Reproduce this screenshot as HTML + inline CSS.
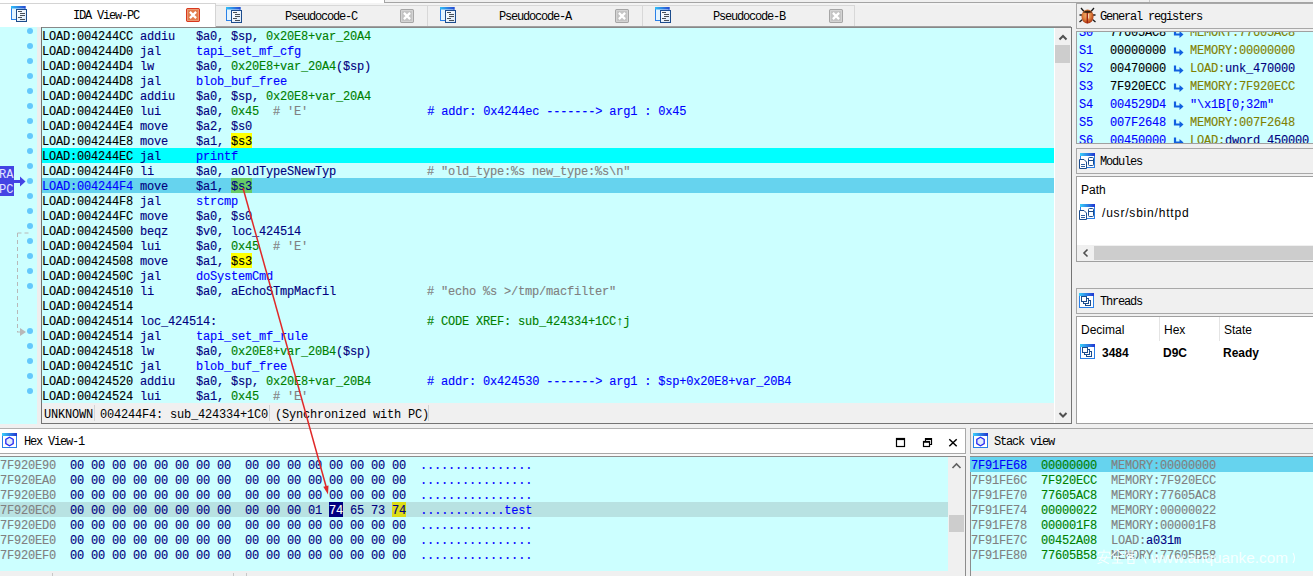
<!DOCTYPE html>
<html><head><meta charset="utf-8"><style>
*{margin:0;padding:0;box-sizing:border-box}
html,body{width:1313px;height:576px;overflow:hidden;background:#f0f0f0;position:relative}
div,svg,span.abs{position:absolute}
.mono{font-family:"Liberation Mono",monospace}
.cr,.hr,.sr,.rr{-webkit-text-stroke:0.12px;font-family:"Liberation Mono",monospace;font-size:12px;letter-spacing:-0.2px;line-height:18px;height:15px;white-space:pre}
.cr>span:first-child,.hr>span:first-child{}
.cr{left:42px;width:1012px;padding-left:0}
.cr.pc{background:#00ffff}
.cr.cur{background:#66d3ee}
.ad{color:#000} .adc{color:#0000ff}
.mn,.rg{color:#000080}
.nm{color:#008000}
.fn{color:#0000ff}
.cm{color:#808080}
.uc{color:#0000ff}
.xr{color:#008000}
.hy,.hg,.hsel,.hy2{display:inline-block;height:15px;vertical-align:top;line-height:18px}
.hy{background:#ffff00} .hy2{background:#dcdc18}
.hg{background:#66cc66;color:#000080}
.ttl{font-family:"Liberation Mono",monospace;font-size:12px;letter-spacing:-1.2px;line-height:12px;color:#000;white-space:pre}
.tab{top:5px;height:21px;background:#f0f0f0;border-top:1px solid #d8d8d8;border-right:1px solid #d8d8d8}
.tab.act{top:3px;height:24px;background:#fff;border-top:1px solid #d4d4d4;border-right:1px solid #d4d4d4}
.dot{left:27px;width:6px;height:6px;border-radius:50%;background:#64c8fc;margin-top:0px}
.hr{left:0;width:948px}
.hr.sel{background:#b8e2e2}
.ha{color:#808080} .hb{color:#000080} .hc{color:#0000ff}
.hsel{background:#000080;color:#fff}
.sr{left:970px;width:343px;padding-left:1px}
.sr.cur{background:#66d3ee}
.sa{color:#808080} .sa0{color:#0000ff} .sv{color:#008000} .sd{color:#808080}
.rr{left:0;width:236px;height:18px;line-height:18px}
.rnm{position:absolute;left:2px;color:#0000ff}
.rv{position:absolute;left:33px}
.rv.k{color:#000} .rv.b{color:#0000ff}
.rar{position:absolute;left:96px;top:5px}
.rd{position:absolute;left:113px}
.rm{color:#808000} .rn{color:#000080} .rs{color:#0000ff}
.ui{font-family:"Liberation Sans",sans-serif;font-size:12px;line-height:14px;color:#000;white-space:pre}
.wm{left:1151px;top:550px;font-family:"Liberation Sans",sans-serif;font-size:15.3px;line-height:16px;color:rgba(255,255,255,0.85);white-space:pre}
</style></head><body>
<svg width="0" height="0" style="position:absolute"><defs><linearGradient id="wg" x1="0" y1="0" x2="1" y2="0"><stop offset="0" stop-color="#3ad0fa"/><stop offset="1" stop-color="#2034d0"/></linearGradient></defs></svg>
<!-- top strip -->
<div style="left:0;top:0;width:384px;height:3px;background:#fff"></div>
<div style="left:384px;top:2px;width:929px;height:1px;background:#a4a4a4"></div>
<div style="left:384px;top:0;width:1px;height:3px;background:#a4a4a4"></div>
<div style="left:1149px;top:0;width:1px;height:2px;background:#c8c8c8"></div>
<div style="left:216px;top:3px;width:855px;height:2px;background:#f4f4f4"></div>
<div class="tab act" style="left:0;width:216px"></div><svg class="ic" style="left:11px;top:6px" width="16" height="16" viewBox="0 0 16 16">
<defs><linearGradient id="g116" x1="0" y1="0" x2="1" y2="0"><stop offset="0" stop-color="#30c0f8"/><stop offset="1" stop-color="#2848d0"/></linearGradient>
<linearGradient id="h116" x1="0" y1="0" x2="1" y2="1"><stop offset="0" stop-color="#ffffff"/><stop offset="1" stop-color="#d8e8f8"/></linearGradient></defs>
<rect x="0.5" y="0.5" width="13.5" height="13" fill="#e4f4ff" stroke="#2a80e8"/>
<rect x="0" y="0" width="14.5" height="2.5" fill="url(#g116)"/>
<rect x="5.5" y="3.5" width="10" height="12" fill="url(#h116)" stroke="#1c4c8c"/>
<path d="M7 5.5h4M9 7.5h5M9 9.5h5M7 11.5h4M9 13.5h5" stroke="#485058" stroke-width="1"/>
</svg><div class="ttl" style="left:73px;top:10px">IDA View-PC</div><svg class="ic" style="left:186px;top:8px" width="14" height="14" viewBox="0 0 14 14">
<rect x="0.5" y="0.5" width="13" height="13" rx="1.6" fill="#e27c4c" stroke="#d8381e" stroke-width="1.1"/>
<rect x="1.6" y="1.6" width="10.8" height="10.8" fill="none" stroke="#eea07c" stroke-width="0.9"/>
<path d="M3.9 3.9 L10.1 10.1 M10.1 3.9 L3.9 10.1" stroke="#fff" stroke-width="2.2"/>
</svg><div class="tab" style="left:216px;width:212px"></div><svg class="ic" style="left:226px;top:7px" width="16" height="16" viewBox="0 0 16 16">
<defs><linearGradient id="g2267" x1="0" y1="0" x2="1" y2="0"><stop offset="0" stop-color="#30c0f8"/><stop offset="1" stop-color="#2848d0"/></linearGradient>
<linearGradient id="h2267" x1="0" y1="0" x2="1" y2="1"><stop offset="0" stop-color="#ffffff"/><stop offset="1" stop-color="#d8e8f8"/></linearGradient></defs>
<rect x="0.5" y="0.5" width="13.5" height="13" fill="#e4f4ff" stroke="#2a80e8"/>
<rect x="0" y="0" width="14.5" height="2.5" fill="url(#g2267)"/>
<rect x="5.5" y="3.5" width="10" height="12" fill="url(#h2267)" stroke="#1c4c8c"/>
<path d="M7 5.5h4M9 7.5h5M9 9.5h5M7 11.5h4M9 13.5h5" stroke="#485058" stroke-width="1"/>
</svg><div class="ttl" style="left:285px;top:11px">Pseudocode-C</div><svg class="ic" style="left:400px;top:9px" width="14" height="14" viewBox="0 0 14 14">
<rect x="0.5" y="0.5" width="13" height="13" rx="1.6" fill="#c4c4c4" stroke="#a6a6a6" stroke-width="1.1"/>
<rect x="1.6" y="1.6" width="10.8" height="10.8" fill="none" stroke="#d6d6d6" stroke-width="0.9"/>
<path d="M3.9 3.9 L10.1 10.1 M10.1 3.9 L3.9 10.1" stroke="#fff" stroke-width="2.2"/>
</svg><div class="tab" style="left:428px;width:215px"></div><svg class="ic" style="left:440px;top:7px" width="16" height="16" viewBox="0 0 16 16">
<defs><linearGradient id="g4407" x1="0" y1="0" x2="1" y2="0"><stop offset="0" stop-color="#30c0f8"/><stop offset="1" stop-color="#2848d0"/></linearGradient>
<linearGradient id="h4407" x1="0" y1="0" x2="1" y2="1"><stop offset="0" stop-color="#ffffff"/><stop offset="1" stop-color="#d8e8f8"/></linearGradient></defs>
<rect x="0.5" y="0.5" width="13.5" height="13" fill="#e4f4ff" stroke="#2a80e8"/>
<rect x="0" y="0" width="14.5" height="2.5" fill="url(#g4407)"/>
<rect x="5.5" y="3.5" width="10" height="12" fill="url(#h4407)" stroke="#1c4c8c"/>
<path d="M7 5.5h4M9 7.5h5M9 9.5h5M7 11.5h4M9 13.5h5" stroke="#485058" stroke-width="1"/>
</svg><div class="ttl" style="left:499px;top:11px">Pseudocode-A</div><svg class="ic" style="left:615px;top:9px" width="14" height="14" viewBox="0 0 14 14">
<rect x="0.5" y="0.5" width="13" height="13" rx="1.6" fill="#c4c4c4" stroke="#a6a6a6" stroke-width="1.1"/>
<rect x="1.6" y="1.6" width="10.8" height="10.8" fill="none" stroke="#d6d6d6" stroke-width="0.9"/>
<path d="M3.9 3.9 L10.1 10.1 M10.1 3.9 L3.9 10.1" stroke="#fff" stroke-width="2.2"/>
</svg><div class="tab" style="left:643px;width:212px"></div><svg class="ic" style="left:655px;top:7px" width="16" height="16" viewBox="0 0 16 16">
<defs><linearGradient id="g6557" x1="0" y1="0" x2="1" y2="0"><stop offset="0" stop-color="#30c0f8"/><stop offset="1" stop-color="#2848d0"/></linearGradient>
<linearGradient id="h6557" x1="0" y1="0" x2="1" y2="1"><stop offset="0" stop-color="#ffffff"/><stop offset="1" stop-color="#d8e8f8"/></linearGradient></defs>
<rect x="0.5" y="0.5" width="13.5" height="13" fill="#e4f4ff" stroke="#2a80e8"/>
<rect x="0" y="0" width="14.5" height="2.5" fill="url(#g6557)"/>
<rect x="5.5" y="3.5" width="10" height="12" fill="url(#h6557)" stroke="#1c4c8c"/>
<path d="M7 5.5h4M9 7.5h5M9 9.5h5M7 11.5h4M9 13.5h5" stroke="#485058" stroke-width="1"/>
</svg><div class="ttl" style="left:713px;top:11px">Pseudocode-B</div><svg class="ic" style="left:829px;top:9px" width="14" height="14" viewBox="0 0 14 14">
<rect x="0.5" y="0.5" width="13" height="13" rx="1.6" fill="#c4c4c4" stroke="#a6a6a6" stroke-width="1.1"/>
<rect x="1.6" y="1.6" width="10.8" height="10.8" fill="none" stroke="#d6d6d6" stroke-width="0.9"/>
<path d="M3.9 3.9 L10.1 10.1 M10.1 3.9 L3.9 10.1" stroke="#fff" stroke-width="2.2"/>
</svg>
<div style="left:216px;top:26px;width:855px;height:1px;background:#a0a0a0"></div>
<div style="left:41px;top:27px;width:1030px;height:1px;background:#888888"></div>

<!-- code view -->
<div style="left:0;top:27px;width:37px;height:397px;background:#ccffff"></div>
<div style="left:37px;top:27px;width:4px;height:397px;background:#eeeeee"></div>
<div style="left:41px;top:27px;width:1px;height:397px;background:#747474"></div>
<div style="left:42px;top:28px;width:1012px;height:375px;background:#ccffff"></div>
<div class="dot" style="top:28px"></div><div class="dot" style="top:43px"></div><div class="dot" style="top:58px"></div><div class="dot" style="top:73px"></div><div class="dot" style="top:88px"></div><div class="dot" style="top:103px"></div><div class="dot" style="top:118px"></div><div class="dot" style="top:133px"></div><div class="dot" style="top:148px"></div><div class="dot" style="top:163px"></div><div class="dot" style="top:178px"></div><div class="dot" style="top:193px"></div><div class="dot" style="top:208px"></div><div class="dot" style="top:223px"></div><div class="dot" style="top:238px"></div><div class="dot" style="top:253px"></div><div class="dot" style="top:268px"></div><div class="dot" style="top:283px"></div><div class="dot" style="top:328px"></div><div class="dot" style="top:343px"></div><div class="dot" style="top:358px"></div><div class="dot" style="top:373px"></div><div class="dot" style="top:388px"></div>
<svg style="left:0;top:0" width="42" height="424" viewBox="0 0 42 424">
<path d="M17.5 233 V332 M17.5 233 H30 M17 332 H22" stroke="#b8b8b8" stroke-width="1" stroke-dasharray="4 3" fill="none"/>
<path d="M20 328 L26 332 L20 336 Z" fill="#b8b8b8"/>
<path d="M14 181.5 H21" stroke="#4444e4" stroke-width="3"/>
<path d="M20 176.5 L25.5 181.5 L20 186.5 Z" fill="#4444e4"/>
</svg>
<div style="left:0;top:166px;width:14px;height:30px;background:#4444e4"></div>
<div class="mono" style="left:-1px;top:168px;font-size:12px;line-height:15px;color:#e4e4ff;white-space:pre">RA<br>PC</div>
<div class="cr" style="top:28px"><span class="ad">LOAD:004244CC</span> <span class="mn">addiu   </span><span class="rg">$a0, $sp, </span><span class="nm">0x20E8+var_20A4</span></div>
<div class="cr" style="top:43px"><span class="ad">LOAD:004244D0</span> <span class="mn">jal     </span><span class="fn">tapi_set_mf_cfg</span></div>
<div class="cr" style="top:58px"><span class="ad">LOAD:004244D4</span> <span class="mn">lw      </span><span class="rg">$a0, </span><span class="nm">0x20E8+var_20A4</span><span class="rg">($sp)</span></div>
<div class="cr" style="top:73px"><span class="ad">LOAD:004244D8</span> <span class="mn">jal     </span><span class="fn">blob_buf_free</span></div>
<div class="cr" style="top:88px"><span class="ad">LOAD:004244DC</span> <span class="mn">addiu   </span><span class="rg">$a0, $sp, </span><span class="nm">0x20E8+var_20A4</span></div>
<div class="cr" style="top:103px"><span class="ad">LOAD:004244E0</span> <span class="mn">lui     </span><span class="rg">$a0, </span><span class="nm">0x45</span>  <span class="cm"># &#x27;E&#x27;</span>                 <span class="uc"># addr: 0x4244ec -------&gt; arg1 : 0x45</span></div>
<div class="cr" style="top:118px"><span class="ad">LOAD:004244E4</span> <span class="mn">move    </span><span class="rg">$a2, $s0</span></div>
<div class="cr" style="top:133px"><span class="ad">LOAD:004244E8</span> <span class="mn">move    </span><span class="rg">$a1, </span><span class="hy">$s3</span></div>
<div class="cr pc" style="top:148px"><span class="ad">LOAD:004244EC</span> <span class="mn">jal     </span><span class="fn">printf</span></div>
<div class="cr" style="top:163px"><span class="ad">LOAD:004244F0</span> <span class="mn">li      </span><span class="rg">$a0, aOldTypeSNewTyp</span>             <span class="cm"># &quot;old_type:%s new_type:%s\n&quot;</span></div>
<div class="cr cur" style="top:178px"><span class="adc">LOAD:004244F4</span> <span class="mn">move    </span><span class="rg">$a1, </span><span class="hg">$s3</span></div>
<div class="cr" style="top:193px"><span class="ad">LOAD:004244F8</span> <span class="mn">jal     </span><span class="fn">strcmp</span></div>
<div class="cr" style="top:208px"><span class="ad">LOAD:004244FC</span> <span class="mn">move    </span><span class="rg">$a0, $s0</span></div>
<div class="cr" style="top:223px"><span class="ad">LOAD:00424500</span> <span class="mn">beqz    </span><span class="rg">$v0, loc_424514</span></div>
<div class="cr" style="top:238px"><span class="ad">LOAD:00424504</span> <span class="mn">lui     </span><span class="rg">$a0, </span><span class="nm">0x45</span>  <span class="cm"># &#x27;E&#x27;</span></div>
<div class="cr" style="top:253px"><span class="ad">LOAD:00424508</span> <span class="mn">move    </span><span class="rg">$a1, </span><span class="hy">$s3</span></div>
<div class="cr" style="top:268px"><span class="ad">LOAD:0042450C</span> <span class="mn">jal     </span><span class="fn">doSystemCmd</span></div>
<div class="cr" style="top:283px"><span class="ad">LOAD:00424510</span> <span class="mn">li      </span><span class="rg">$a0, aEchoSTmpMacfil</span>             <span class="cm"># &quot;echo %s &gt;/tmp/macfilter&quot;</span></div>
<div class="cr" style="top:298px"><span class="ad">LOAD:00424514</span></div>
<div class="cr" style="top:313px"><span class="ad">LOAD:00424514</span> <span class="rg">loc_424514:</span>                              <span class="xr"># CODE XREF: sub_424334+1CC↑j</span></div>
<div class="cr" style="top:328px"><span class="ad">LOAD:00424514</span> <span class="mn">jal     </span><span class="fn">tapi_set_mf_rule</span></div>
<div class="cr" style="top:343px"><span class="ad">LOAD:00424518</span> <span class="mn">lw      </span><span class="rg">$a0, </span><span class="nm">0x20E8+var_20B4</span><span class="rg">($sp)</span></div>
<div class="cr" style="top:358px"><span class="ad">LOAD:0042451C</span> <span class="mn">jal     </span><span class="fn">blob_buf_free</span></div>
<div class="cr" style="top:373px"><span class="ad">LOAD:00424520</span> <span class="mn">addiu   </span><span class="rg">$a0, $sp, </span><span class="nm">0x20E8+var_20B4</span>        <span class="uc"># addr: 0x424530 -------&gt; arg1 : $sp+0x20E8+var_20B4</span></div>
<div class="cr" style="top:388px"><span class="ad">LOAD:00424524</span> <span class="mn">lui     </span><span class="rg">$a1, </span><span class="nm">0x45</span>  <span class="cm"># &#x27;E&#x27;</span></div>

<!-- code scrollbar -->
<div style="left:1054px;top:28px;width:1px;height:395px;background:#ffffff"></div>
<div style="left:1055px;top:28px;width:16px;height:395px;background:#f0f0f0"></div>
<svg style="left:1055px;top:30px" width="16" height="14" viewBox="0 0 16 14"><path d="M4.5 9.5 L8 6 L11.5 9.5" stroke="#505050" stroke-width="2" fill="none"/></svg>
<div style="left:1055px;top:45px;width:15px;height:18px;background:#cdcdcd"></div>
<svg style="left:1055px;top:408px" width="16" height="14" viewBox="0 0 16 14"><path d="M4.5 5 L8 8.5 L11.5 5" stroke="#505050" stroke-width="2" fill="none"/></svg>
<div style="left:1071px;top:27px;width:1px;height:397px;background:#747474"></div>
<!-- status bar -->
<div style="left:42px;top:403px;width:1012px;height:20px;background:#f0f0f0"></div>
<div style="left:42px;top:423px;width:1029px;height:1px;background:#747474"></div>
<div class="cr" style="left:44px;top:406px;color:#000;-webkit-text-stroke:0">UNKNOWN</div>
<div class="cr" style="left:100px;top:406px;color:#000;-webkit-text-stroke:0">004244F4: sub_424334+1C0</div>
<div class="cr" style="left:275px;top:406px;color:#000;-webkit-text-stroke:0">(Synchronized with PC)</div>
<div style="left:94px;top:405px;width:1px;height:16px;background:#d4d4d4"></div>
<div style="left:269px;top:405px;width:1px;height:16px;background:#d4d4d4"></div>
<div style="left:428px;top:405px;width:1px;height:16px;background:#d4d4d4"></div>

<!-- hex view -->
<div style="left:0;top:428px;width:966px;height:26px;background:#fff;border-top:1px solid #b0b0b0;border-right:1px solid #a8a8a8;border-bottom:1px solid #a8a8a8"></div>
<div style="left:0;top:454px;width:966px;height:2px;background:#f8f8f8"></div>
<div style="left:0;top:456px;width:966px;height:1px;background:#8c8c8c"></div>
<svg class="ic" style="left:2px;top:433px" width="16" height="16" viewBox="0 0 16 16"><rect x="0.5" y="0.5" width="14" height="14" fill="#fdfeff" stroke="#2a7ee6"/><rect x="0" y="0" width="15" height="3" fill="url(#wg)"/><path d="M7.5 4.3 L11.2 6.4 V10.6 L7.5 12.7 L3.8 10.6 V6.4 Z" fill="#e2ecfa" stroke="#2a2af2" stroke-width="1.3"/></svg>
<div class="ttl" style="left:24px;top:436px">Hex View-1</div>
<svg style="left:894px;top:435px" width="70" height="14" viewBox="0 0 70 14">
<rect x="2.5" y="3.5" width="8" height="8" fill="none" stroke="#000" stroke-width="1.2"/><path d="M2 4.2 H11" stroke="#000" stroke-width="1.8"/>
<path d="M31.5 6 V3.5 H37.5 V9.5 H35" fill="none" stroke="#000" stroke-width="1.2"/><path d="M31 4.2 H38" stroke="#000" stroke-width="1.6"/>
<rect x="29.5" y="6.5" width="6" height="5" fill="#fff" stroke="#000" stroke-width="1.2"/><path d="M29 7 H36" stroke="#000" stroke-width="1.5"/>
<path d="M55.3 4.3 L62.7 11.2 M62.7 4.3 L55.3 11.2" stroke="#000" stroke-width="1.5"/>
</svg>
<div style="left:0;top:457px;width:948px;height:114px;background:#ccffff"></div>
<div class="hr" style="top:457px"><span class="ha">7F920E90</span>  <span class="hb">00 00 00 00 00 00 00 00  00 00 00 00 00 00 00 00</span>  <span class="hc">................</span></div>
<div class="hr" style="top:472px"><span class="ha">7F920EA0</span>  <span class="hb">00 00 00 00 00 00 00 00  00 00 00 00 00 00 00 00</span>  <span class="hc">................</span></div>
<div class="hr" style="top:487px"><span class="ha">7F920EB0</span>  <span class="hb">00 00 00 00 00 00 00 00  00 00 00 00 00 00 00 00</span>  <span class="hc">................</span></div>
<div class="hr sel" style="top:502px"><span class="ha">7F920EC0</span>  <span class="hb">00 00 00 00 00 00 00 00  00 00 00 01 <span class="hsel">74</span> 65 73 <span class="hy2">74</span></span>  <span class="hc">............test</span></div>
<div class="hr" style="top:517px"><span class="ha">7F920ED0</span>  <span class="hb">00 00 00 00 00 00 00 00  00 00 00 00 00 00 00 00</span>  <span class="hc">................</span></div>
<div class="hr" style="top:532px"><span class="ha">7F920EE0</span>  <span class="hb">00 00 00 00 00 00 00 00  00 00 00 00 00 00 00 00</span>  <span class="hc">................</span></div>
<div class="hr" style="top:547px"><span class="ha">7F920EF0</span>  <span class="hb">00 00 00 00 00 00 00 00  00 00 00 00 00 00 00 00</span>  <span class="hc">................</span></div>

<div style="left:948px;top:457px;width:17px;height:114px;background:#f0f0f0"></div>
<svg style="left:948px;top:459px" width="17" height="14" viewBox="0 0 17 14"><path d="M4.5 9 L8.5 5 L12.5 9" stroke="#606060" stroke-width="1.6" fill="none"/></svg>
<div style="left:949px;top:515px;width:15px;height:17px;background:#cdcdcd"></div>
<div style="left:965px;top:456px;width:1px;height:120px;background:#8c8c8c"></div>
<div style="left:52px;top:573px;width:1px;height:3px;background:#c8c8c8"></div>
<div style="left:233px;top:573px;width:1px;height:3px;background:#c8c8c8"></div>
<div style="left:246px;top:573px;width:1px;height:3px;background:#c8c8c8"></div>

<!-- stack view -->
<div style="left:970px;top:428px;width:343px;height:26px;background:#f0f0f0;border:1px solid #a8a8a8;border-right:none"></div>
<svg class="ic" style="left:973px;top:433px" width="16" height="16" viewBox="0 0 16 16"><rect x="0.5" y="0.5" width="14" height="14" fill="#fdfeff" stroke="#2a7ee6"/><rect x="0" y="0" width="15" height="3" fill="url(#wg)"/><path d="M7.5 4.3 L11.2 6.4 V10.6 L7.5 12.7 L3.8 10.6 V6.4 Z" fill="#e2ecfa" stroke="#2a2af2" stroke-width="1.3"/></svg>
<div class="ttl" style="left:994px;top:436px">Stack view</div>
<div style="left:970px;top:456px;width:343px;height:1px;background:#8c8c8c"></div>
<div style="left:970px;top:456px;width:1px;height:120px;background:#8c8c8c"></div>
<div style="left:971px;top:457px;width:342px;height:114px;background:#ccffff"></div>
<div class="sr cur" style="top:457px"><span class="sa0">7F91FE68</span>  <span class="sv">00000000</span>  <span class="sd">MEMORY:00000000</span></div>
<div class="sr" style="top:472px"><span class="sa">7F91FE6C</span>  <span class="sv">7F920ECC</span>  <span class="sd">MEMORY:7F920ECC</span></div>
<div class="sr" style="top:487px"><span class="sa">7F91FE70</span>  <span class="sv">77605AC8</span>  <span class="sd">MEMORY:77605AC8</span></div>
<div class="sr" style="top:502px"><span class="sa">7F91FE74</span>  <span class="sv">00000022</span>  <span class="sd">MEMORY:00000022</span></div>
<div class="sr" style="top:517px"><span class="sa">7F91FE78</span>  <span class="sv">000001F8</span>  <span class="sd">MEMORY:000001F8</span></div>
<div class="sr" style="top:532px"><span class="sa">7F91FE7C</span>  <span class="sv">00452A08</span>  <span class="sd">LOAD:</span><span class="rg">a031m</span></div>
<div class="sr" style="top:547px"><span class="sa">7F91FE80</span>  <span class="sv">77605B58</span>  <span class="sd">MEMORY:77605B58</span></div>

<svg style="left:1096px;top:549px" width="56" height="16" viewBox="0 0 56 16"><g stroke="rgba(255,255,255,0.85)" stroke-width="1.1" fill="none" stroke-linecap="round"><path d="M8 1 V2.8 M2.5 5 V3.3 H13.5 V5 M7 5 Q6 8.5 3.5 11.5 M1.5 8.8 H14.5 M10.5 7 Q9.5 12.5 2 14.5 M5.5 11 L12.5 14.5"/><path d="M21.5 1 L15.5 6.5 M21.5 1 L27.5 6.5 M18 7.5 H25 M21.5 7.5 V14 M18.5 10.8 H24.5 M16.5 14 H26.5"/><path d="M35 1 V2.5 M29.5 4.5 V3 H40.5 V4.5 M33 4.5 L30.5 7 M33 5.5 H38 L31.5 9.5 M33.5 7 L39.5 9.5 M32 10.5 V14.5 H38 V10.5 Z"/><path d="M50 4 Q47 9 50 14"/></g></svg><div class="wm">www.anquanke.com</div><svg style="left:1290px;top:549px" width="10" height="16" viewBox="0 0 10 16"><path d="M3 4 Q6 9 3 14" stroke="rgba(255,255,255,0.85)" stroke-width="1.1" fill="none"/></svg>

<!-- registers -->
<div style="left:1076px;top:3px;width:237px;height:26px;background:#f0f0f0;border:1px solid #a8a8a8;border-right:none"></div>
<svg class="ic" style="left:1078px;top:6px" width="19" height="19" viewBox="0 0 19 19">
<defs><radialGradient id="bg1" cx="0.45" cy="0.4" r="0.65"><stop offset="0" stop-color="#f4b070"/><stop offset="0.5" stop-color="#e08440"/><stop offset="0.85" stop-color="#b84418"/><stop offset="1" stop-color="#902010"/></radialGradient></defs>
<path d="M3 2 L6 5.5 M16 2 L13 5.5 M1.5 9 H4 M17.5 9 H15 M1.5 16 L4.5 13.5 M17.5 16 L14.5 13.5" stroke="#1a1a1a" stroke-width="1.3"/>
<ellipse cx="9.5" cy="10.5" rx="6" ry="7" fill="url(#bg1)"/>
<path d="M4.6 6.2 Q9.5 2.6 14.4 6.2 Q9.5 7.8 4.6 6.2 Z" fill="#3a2210"/>
<path d="M9.3 7 V17.3" stroke="#982010" stroke-width="1.3"/>
<path d="M10.6 7.8 V12.5" stroke="#fff4e8" stroke-width="0.8" opacity="0.85"/>
</svg>
<div class="ttl" style="left:1100px;top:11px">General registers</div>
<div style="left:1076px;top:31px;width:237px;height:113px;background:#ccffff;border:1px solid #a0a0a0;border-right:none"></div>
<div style="left:1077px;top:32px;width:236px;height:111px;overflow:hidden">
<div class="rr" style="top:-8px"><span class="rnm">S0</span><span class="rv k">77605AC8</span><svg class="rar" width="11" height="10" viewBox="0 0 11 10"><path d="M2 0.5 V5.5 H8" stroke="#1060e0" stroke-width="2.2" fill="none"/><path d="M6.5 2 L10.5 5.5 L6.5 9 Z" fill="#1060e0"/></svg><span class="rd"><span class="rm">MEMORY:77605AC8</span></span></div>
<div class="rr" style="top:10px"><span class="rnm">S1</span><span class="rv k">00000000</span><svg class="rar" width="11" height="10" viewBox="0 0 11 10"><path d="M2 0.5 V5.5 H8" stroke="#1060e0" stroke-width="2.2" fill="none"/><path d="M6.5 2 L10.5 5.5 L6.5 9 Z" fill="#1060e0"/></svg><span class="rd"><span class="rm">MEMORY:00000000</span></span></div>
<div class="rr" style="top:28px"><span class="rnm">S2</span><span class="rv k">00470000</span><svg class="rar" width="11" height="10" viewBox="0 0 11 10"><path d="M2 0.5 V5.5 H8" stroke="#1060e0" stroke-width="2.2" fill="none"/><path d="M6.5 2 L10.5 5.5 L6.5 9 Z" fill="#1060e0"/></svg><span class="rd"><span class="rm">LOAD:</span><span class="rn">unk_470000</span></span></div>
<div class="rr" style="top:46px"><span class="rnm">S3</span><span class="rv k">7F920ECC</span><svg class="rar" width="11" height="10" viewBox="0 0 11 10"><path d="M2 0.5 V5.5 H8" stroke="#1060e0" stroke-width="2.2" fill="none"/><path d="M6.5 2 L10.5 5.5 L6.5 9 Z" fill="#1060e0"/></svg><span class="rd"><span class="rm">MEMORY:7F920ECC</span></span></div>
<div class="rr" style="top:64px"><span class="rnm">S4</span><span class="rv b">004529D4</span><svg class="rar" width="11" height="10" viewBox="0 0 11 10"><path d="M2 0.5 V5.5 H8" stroke="#1060e0" stroke-width="2.2" fill="none"/><path d="M6.5 2 L10.5 5.5 L6.5 9 Z" fill="#1060e0"/></svg><span class="rd"><span class="rs">&quot;\x1B[0;32m&quot;</span></span></div>
<div class="rr" style="top:82px"><span class="rnm">S5</span><span class="rv b">007F2648</span><svg class="rar" width="11" height="10" viewBox="0 0 11 10"><path d="M2 0.5 V5.5 H8" stroke="#1060e0" stroke-width="2.2" fill="none"/><path d="M6.5 2 L10.5 5.5 L6.5 9 Z" fill="#1060e0"/></svg><span class="rd"><span class="rm">MEMORY:007F2648</span></span></div>
<div class="rr" style="top:100px"><span class="rnm">S6</span><span class="rv b">00450000</span><svg class="rar" width="11" height="10" viewBox="0 0 11 10"><path d="M2 0.5 V5.5 H8" stroke="#1060e0" stroke-width="2.2" fill="none"/><path d="M6.5 2 L10.5 5.5 L6.5 9 Z" fill="#1060e0"/></svg><span class="rd"><span class="rm">LOAD:</span><span class="rn">dword_450000</span></span></div>

</div>

<!-- modules -->
<div style="left:1076px;top:148px;width:237px;height:26px;background:#f0f0f0;border:1px solid #a8a8a8;border-right:none"></div>
<svg class="ic" style="left:1079px;top:152px" width="17" height="17" viewBox="0 0 17 17"><rect x="1.5" y="1.5" width="14" height="14" fill="#fdfeff" stroke="#2a7ee6"/><rect x="1" y="1" width="15" height="3" fill="url(#wg)"/><rect x="9.5" y="5.5" width="5" height="8" rx="1" fill="#fff" stroke="#1c4c8c"/><path d="M10 8.5h4" stroke="#1c4c8c"/><path d="M0.5 7.5 H5 L7.5 10 V16.5 H0.5 Z" fill="#fff" stroke="#1c4c8c"/><path d="M2 12.5h4M2 14.5h4" stroke="#3060a0"/></svg>
<div class="ttl" style="left:1100px;top:156px">Modules</div>
<div style="left:1076px;top:176px;width:237px;height:86px;background:#fff;border:1px solid #a0a0a0;border-right:none"></div>
<div class="ui" style="left:1081px;top:183px">Path</div>
<svg class="ic" style="left:1079px;top:203px" width="17" height="17" viewBox="0 0 17 17"><rect x="1.5" y="1.5" width="14" height="14" fill="#fdfeff" stroke="#2a7ee6"/><rect x="1" y="1" width="15" height="3" fill="url(#wg)"/><rect x="9.5" y="5.5" width="5" height="8" rx="1" fill="#fff" stroke="#1c4c8c"/><path d="M10 8.5h4" stroke="#1c4c8c"/><path d="M0.5 7.5 H5 L7.5 10 V16.5 H0.5 Z" fill="#fff" stroke="#1c4c8c"/><path d="M2 12.5h4M2 14.5h4" stroke="#3060a0"/></svg>
<div class="ui" style="left:1102px;top:206px;letter-spacing:0.8px">/usr/sbin/httpd</div>
<div style="left:1077px;top:245px;width:236px;height:16px;background:#f0f0f0"></div>
<div style="left:1094px;top:246px;width:219px;height:14px;background:#cdcdcd"></div>
<svg style="left:1079px;top:246px" width="14" height="14" viewBox="0 0 14 14"><path d="M8.5 3.5 L5 7 L8.5 10.5" stroke="#505050" stroke-width="1.6" fill="none"/></svg>

<!-- threads -->
<div style="left:1076px;top:288px;width:237px;height:26px;background:#f0f0f0;border:1px solid #a8a8a8;border-right:none"></div>
<svg class="ic" style="left:1079px;top:293px" width="16" height="16" viewBox="0 0 16 16"><rect x="0.5" y="0.5" width="14" height="14" fill="#fdfeff" stroke="#2a7ee6"/><rect x="0" y="0" width="15" height="3" fill="url(#wg)"/><rect x="6.5" y="7.5" width="5" height="5" fill="#fff" stroke="#1c4c8c"/><rect x="4.5" y="5.5" width="5" height="5" fill="#fff" stroke="#1c4c8c"/><rect x="2.5" y="3.5" width="5" height="5" fill="#fff" stroke="#1c4c8c"/></svg>
<div class="ttl" style="left:1100px;top:296px">Threads</div>
<div style="left:1076px;top:316px;width:237px;height:108px;background:#fff;border:1px solid #a0a0a0;border-right:none"></div>
<div class="ui" style="left:1081px;top:323px">Decimal</div>
<div class="ui" style="left:1164px;top:323px">Hex</div>
<div class="ui" style="left:1224px;top:323px">State</div>
<div style="left:1159px;top:317px;width:1px;height:24px;background:#e4e4e4"></div>
<div style="left:1219px;top:317px;width:1px;height:24px;background:#e4e4e4"></div>
<svg class="ic" style="left:1080px;top:344px" width="16" height="16" viewBox="0 0 16 16"><rect x="0.5" y="0.5" width="14" height="14" fill="#fdfeff" stroke="#2a7ee6"/><rect x="0" y="0" width="15" height="3" fill="url(#wg)"/><rect x="6.5" y="7.5" width="5" height="5" fill="#fff" stroke="#1c4c8c"/><rect x="4.5" y="5.5" width="5" height="5" fill="#fff" stroke="#1c4c8c"/><rect x="2.5" y="3.5" width="5" height="5" fill="#fff" stroke="#1c4c8c"/></svg>
<div class="ui" style="left:1102px;top:346px;font-weight:bold">3484</div>
<div class="ui" style="left:1163px;top:346px;font-weight:bold">D9C</div>
<div class="ui" style="left:1223px;top:346px;font-weight:bold">Ready</div>

<!-- red annotation arrow -->
<svg style="left:0;top:0" width="1313" height="576" viewBox="0 0 1313 576">
<path d="M243 188 L326.5 488" stroke="#e02828" stroke-width="1.5" fill="none"/>
<path d="M328 494.5 L323.3 486.8 L328.5 485.4 Z" fill="#e02828"/>
</svg>
</body></html>
